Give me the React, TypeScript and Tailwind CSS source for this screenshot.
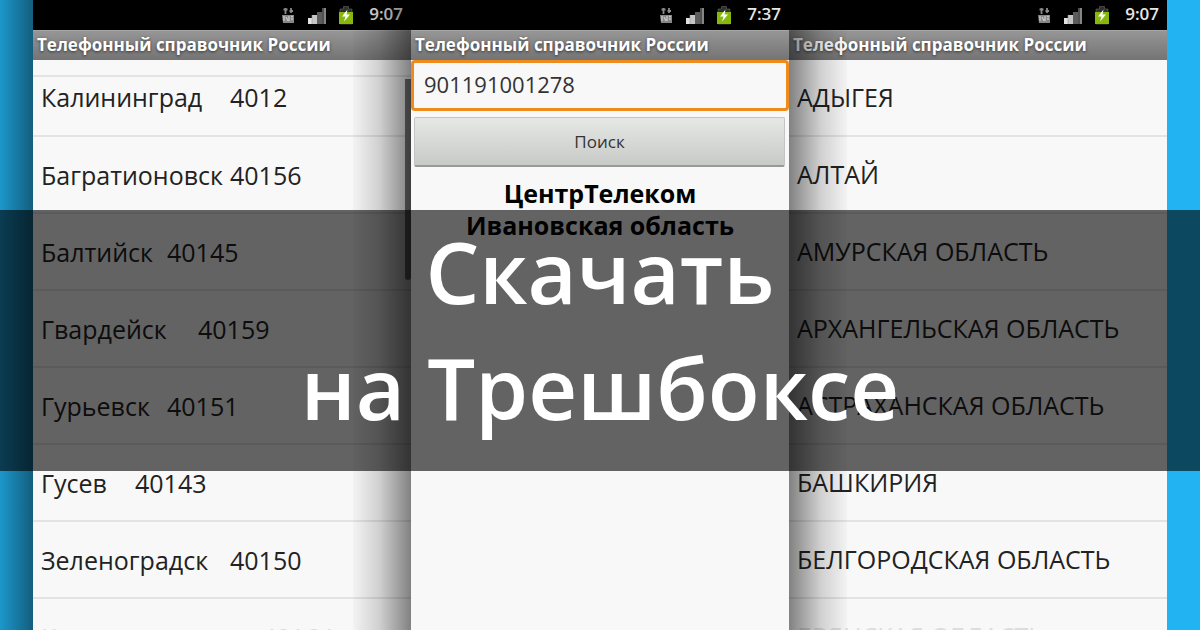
import { ReactNode } from 'react';

interface City {
  name: string;
  code: string;
  column: string;
}

const cities: City[] = [
  { name: 'Калининград', code: '4012', column: 'w-[189px]' },
  { name: 'Багратионовск', code: '40156', column: 'w-[189px]' },
  { name: 'Балтийск', code: '40145', column: 'w-[126px]' },
  { name: 'Гвардейск', code: '40159', column: 'w-[157px]' },
  { name: 'Гурьевск', code: '40151', column: 'w-[126px]' },
  { name: 'Гусев', code: '40143', column: 'w-[94px]' },
  { name: 'Зеленоградск', code: '40150', column: 'w-[189px]' },
  { name: 'Краснознаменск', code: '40164', column: 'w-[221px]' },
];

const regions = [
  'АДЫГЕЯ',
  'АЛТАЙ',
  'АМУРСКАЯ ОБЛАСТЬ',
  'АРХАНГЕЛЬСКАЯ ОБЛАСТЬ',
  'АСТРАХАНСКАЯ ОБЛАСТЬ',
  'БАШКИРИЯ',
  'БЕЛГОРОДСКАЯ ОБЛАСТЬ',
  'БРЯНСКАЯ ОБЛАСТЬ',
];

function NetworkIcon() {
  return (
    <svg width="14" height="20" viewBox="0 0 14 20" fill="none" aria-hidden="true">
      <path d="M4.500 9V3M2.500 4.500h4" stroke="#8a8a8a" strokeWidth="1.8" />
      <path d="M10 3v5M8.500 6h3.500" stroke="#8a8a8a" strokeWidth="1.8" />
      <path d="M1 10h12v8H2z" fill="#868686" />
      <path d="M3 11v5M5 12l2 4M8 11v5M10 11.500h2M10 14h2" stroke="#c4c4c4" strokeWidth="1.4" />
    </svg>
  );
}

function SignalIcon() {
  return (
    <svg width="20" height="20" viewBox="0 0 20 20" aria-hidden="true">
      <path d="M1 13h4v6H1z" fill="#e2e2e2" />
      <path d="M5 10h5v9H5z" fill="#c6c6c6" />
      <path d="M10 7h5v12h-5z" fill="#5c5c5c" />
      <path d="M15 3h4v16h-4z" fill="#505050" />
      <path d="M17 3h2v16h-2z" fill="#858585" />
      <path d="M5 10v9" stroke="#999" strokeWidth=".6" />
    </svg>
  );
}

function BatteryIcon() {
  return (
    <svg width="14" height="20" viewBox="0 0 14 20" aria-hidden="true">
      <path d="M4.500 1.500h5V4H13v15H1V4h3.500z" fill="#303030" stroke="#666" strokeWidth=".6" />
      <path d="M0 7h14v12H0z" fill="#86b80c" />
      <path d="M8.500 4.500 3 11.500h3.500l-1.500 5L11 9.500H7.500z" fill="#fff" />
    </svg>
  );
}

function Phone({ time, children }: { time: string; children: ReactNode }) {
  return (
    <section className="relative flex-1 min-w-0 overflow-hidden bg-[#f8f8f8]">
      <header className="flex h-[30px] items-center justify-end bg-black pr-2">
        <div className="flex items-center">
          <NetworkIcon />
          <span className="ml-3"><SignalIcon /></span>
          <span className="ml-3"><BatteryIcon /></span>
        </div>
        <span className="ml-4 pb-1 text-[17px] font-semibold leading-none text-[#e6e6e6]">{time}</span>
      </header>
      <h2 className="h-[30px] truncate border-t border-[#a6a6a6] bg-linear-to-b from-[#969696] to-[#747474] px-1 text-[17px] font-bold leading-[27px] text-white [text-shadow:0_1px_3px_#333]">
        Телефонный справочник России
      </h2>
      {children}
    </section>
  );
}

// Darkening of the side phones next to the middle one
const shadeStops =
  'from-black/48 from-0% via-black/16 via-55% to-black/2 to-100%';

export default function App() {
  return (
    <main className="relative flex h-screen overflow-hidden bg-[#22b4f2] font-['Open_Sans',sans-serif]">
      <div className="w-[33px] bg-linear-to-l from-black/48 to-black/16" />

      <Phone time="9:07">
        <div className="h-[17px] border-b-2 border-[#e3e3e3]" />
        <ul className="text-[25px] leading-10 text-[#222]">
          {cities.map((city, i) => (
            <li
              key={city.code}
              className={
                i === 0
                  ? 'flex h-[60px] border-b-2 border-[#e3e3e3] px-2'
                  : 'flex h-[77px] items-center border-b-2 border-[#e3e3e3] px-2 last:text-[#ddd]'
              }
            >
              <span className={city.column}>{city.name}</span>
              <span>{city.code}</span>
            </li>
          ))}
        </ul>
        <div className="absolute top-[79px] right-0 h-[201px] w-[6px] rounded-b-full bg-[#777]" />
        <div className={`absolute inset-y-0 right-0 w-[58px] bg-linear-to-l ${shadeStops}`} />
      </Phone>

      <Phone time="7:37">
        <form onSubmit={e => e.preventDefault()}>
          <input
            type="text"
            aria-label="Номер телефона"
            defaultValue="901191001278"
            className="block h-[51px] w-full rounded-sm border-3 border-[#ef8b1d] bg-[#f8f8f8] px-[10px] pb-1 text-[22px] text-[#333] outline-none"
          />
          <div className="px-[3px] pt-[6px] pr-1">
            <button
              type="submit"
              className="h-[50px] w-full rounded-xs border border-b-2 border-[#c4c4c4] border-b-[#999] bg-linear-to-b from-[#e6e8e6] to-[#c8cac8] text-[17px] text-[#333]"
            >
              Поиск
            </button>
          </div>
        </form>
        <p className="pt-[10px] text-center text-[25px] font-bold leading-8 text-black">
          ЦентрТелеком
          <br />
          Ивановская область
        </p>
      </Phone>

      <Phone time="9:07">
        <ul className="text-[25px] text-[#222]">
          {regions.map(region => (
            <li
              key={region}
              className="flex h-[77px] items-center border-b-2 border-[#e3e3e3] px-2 whitespace-nowrap last:text-[#ddd]"
            >
              {region}
            </li>
          ))}
        </ul>
        <div className={`absolute inset-y-0 left-0 w-[58px] bg-linear-to-r ${shadeStops}`} />
      </Phone>

      <div className="w-[33px]" />

      <div className="absolute inset-x-0 top-1/3 bg-black/60 pt-[3px] pb-[26px]">
        <h1 className="text-center text-[85px] font-semibold leading-[116px] text-white">
          Скачать
          <br />
          на Трешбоксе
        </h1>
      </div>
    </main>
  );
}
